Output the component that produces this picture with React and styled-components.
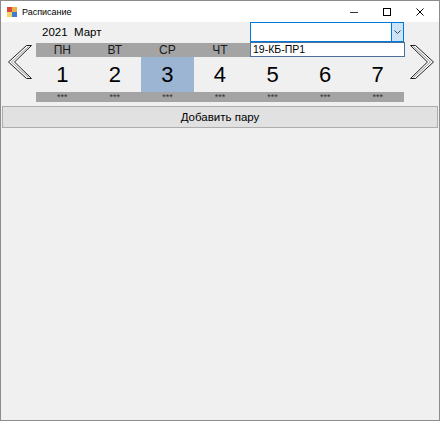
import React from "react";
import styled, { createGlobalStyle } from "styled-components";

const GlobalStyle = createGlobalStyle`
  html, body {
    margin: 0;
    padding: 0;
    background: #5a5a5a;
  }
  * {
    box-sizing: border-box;
  }
`;

const days = [
  { name: "ПН", num: 1 },
  { name: "ВТ", num: 2 },
  { name: "СР", num: 3 },
  { name: "ЧТ", num: 4 },
  { name: "ПТ", num: 5 },
  { name: "СБ", num: 6 },
  { name: "ВС", num: 7 },
];

const Window = styled.div`
  width: 440px;
  height: 421px;
  border: 1px solid #8c8c8c;
  background: #f0f0f0;
  display: flex;
  flex-direction: column;
  font-family: "Liberation Sans", Arial, sans-serif;
  color: #000;
`;

const TitleBar = styled.div`
  height: 21px;
  background: #fff;
  display: flex;
  align-items: center;
  padding-left: 6px;
  padding-right: 3px;
`;

const Title = styled.span`
  font-size: 9px;
  margin-left: 5px;
  flex: 1;
`;

const Caption = styled.div`
  width: 33px;
  height: 21px;
  display: flex;
  align-items: center;
  justify-content: center;
`;

const Content = styled.div`
  flex: 1;
  display: flex;
  flex-direction: column;
`;

const CalendarArea = styled.div`
  display: flex;
  align-items: flex-start;
  padding-left: 7px;
`;

const Arrow = styled.div`
  width: 24px;
  height: 34px;
  margin-top: 23px;
  margin-left: ${(p) => p.$gap || 0}px;
`;

const Calendar = styled.div`
  width: 368px;
  margin-left: 4px;
  display: flex;
  flex-direction: column;
`;

const TopRow = styled.div`
  height: 21px;
  display: flex;
  align-items: flex-start;
  justify-content: space-between;
`;

const YearLabel = styled.span`
  font-size: 11.5px;
  white-space: pre;
  padding-left: 6px;
  margin-top: 4px;
`;

const Combo = styled.div`
  position: relative;
  width: 154px;
  height: 20px;
  border: 1px solid #0078d7;
  background: #fff;
  display: flex;
  justify-content: flex-end;
`;

const ComboButton = styled.div`
  width: 12px;
  height: 100%;
  background: #cce4f7;
  border-left: 1px solid #0078d7;
  display: flex;
  align-items: center;
  justify-content: center;
`;

const DropList = styled.div`
  position: absolute;
  top: 19px;
  left: -1px;
  width: 155px;
  height: 15px;
  border: 1px solid #4a6f9c;
  background: #fff;
  font-size: 10.5px;
  padding-left: 2px;
  line-height: 13px;
  z-index: 2;
`;

const Row = styled.div`
  display: grid;
  grid-template-columns: repeat(7, 1fr);
  height: ${(p) => p.$h}px;
  background: ${(p) => p.$bg};
`;

const DayName = styled.div`
  font-size: 12px;
  color: #1a1a1a;
  text-align: center;
  line-height: 14px;
`;

const DayNum = styled.div`
  font-size: 22px;
  text-align: center;
  line-height: 35px;
  background: ${(p) => (p.$active ? "#9bb5d3" : "transparent")};
`;

const Stars = styled.div`
  font-size: 9px;
  color: #333;
  text-align: center;
  line-height: 10px;
  overflow: hidden;
`;

const AddButton = styled.button`
  margin: 4px 1px 0;
  height: 22px;
  border: 1px solid #adadad;
  background: #e1e1e1;
  font-family: "Liberation Sans", Arial, sans-serif;
  font-size: 11.5px;
  color: #000;
  padding: 0;
`;

const AppIcon = () => (
  <svg width="10" height="10" viewBox="0 0 10 10">
    <rect x="0" y="0" width="10" height="10" fill="#e8b04a" />
    <rect x="0" y="0" width="5" height="5" fill="#d9463b" />
    <rect x="5" y="5" width="5" height="5" fill="#3e7bd1" />
    <rect x="0" y="5" width="5" height="5" fill="#f2d66b" />
  </svg>
);

const ChevronArrow = ({ dir }) => (
  <svg width="24" height="34" viewBox="0 0 24 34">
    <g transform={dir === "right" ? "translate(24,0) scale(-1,1)" : undefined}>
      <polygon
        points="18.5,0.5 23.5,0.5 6.5,17 23.5,33.5 18.5,33.5 0.5,17"
        fill="#fafafa"
        stroke="#1e1e1e"
        strokeWidth="1"
      />
      <polyline points="20.5,1.5 3.5,17 20.5,32.5" fill="none" stroke="#9a9a9a" strokeWidth="1" />
    </g>
  </svg>
);

export default function App() {
  return (
    <>
      <GlobalStyle />
      <Window>
        <TitleBar>
          <AppIcon />
          <Title>Расписание</Title>
          <Caption>
            <svg width="8" height="8" viewBox="0 0 8 8">
              <line x1="0" y1="4.5" x2="8" y2="4.5" stroke="#333" strokeWidth="1" />
            </svg>
          </Caption>
          <Caption>
            <svg width="8" height="8" viewBox="0 0 8 8">
              <rect x="0.5" y="0.5" width="7" height="7" fill="none" stroke="#000" strokeWidth="1" />
            </svg>
          </Caption>
          <Caption>
            <svg width="8" height="8" viewBox="0 0 8 8">
              <path d="M0.5 0.5 L7.5 7.5 M7.5 0.5 L0.5 7.5" stroke="#000" strokeWidth="1" />
            </svg>
          </Caption>
        </TitleBar>
        <Content>
          <CalendarArea>
            <Arrow>
              <ChevronArrow dir="left" />
            </Arrow>
            <Calendar>
              <TopRow>
                <YearLabel>2021  Март</YearLabel>
                <Combo>
                  <ComboButton>
                    <svg width="7" height="4" viewBox="0 0 7 4">
                      <polyline points="0.5,0.5 3.5,3.5 6.5,0.5" fill="none" stroke="#444" strokeWidth="1" />
                    </svg>
                  </ComboButton>
                  <DropList>19-КБ-ПР1</DropList>
                </Combo>
              </TopRow>
              <Row $h={14} $bg="#a4a4a4">
                {days.map((d) => (
                  <DayName key={d.name}>{d.name}</DayName>
                ))}
              </Row>
              <Row $h={35} $bg="#f0f0f0">
                {days.map((d) => (
                  <DayNum key={d.num} $active={d.num === 3}>
                    {d.num}
                  </DayNum>
                ))}
              </Row>
              <Row $h={10} $bg="#a4a4a4">
                {days.map((d) => (
                  <Stars key={d.num}>***</Stars>
                ))}
              </Row>
            </Calendar>
            <Arrow $gap={6}>
              <ChevronArrow dir="right" />
            </Arrow>
          </CalendarArea>
          <AddButton>Добавить пару</AddButton>
        </Content>
      </Window>
    </>
  );
}
